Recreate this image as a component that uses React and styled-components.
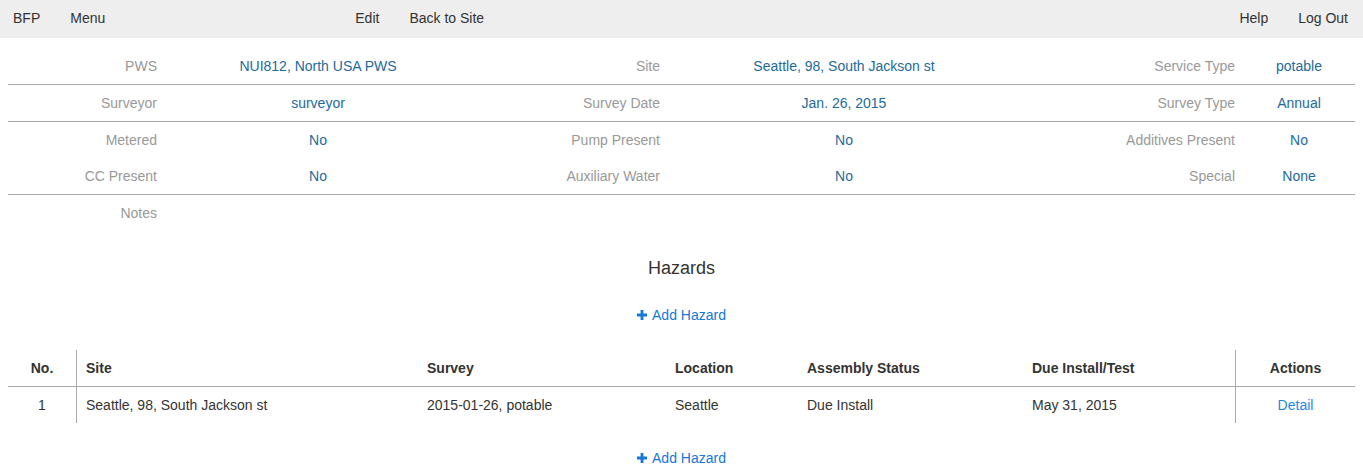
import React from "react";
import styled, { createGlobalStyle } from "styled-components";

const Global = createGlobalStyle`
  html, body { margin: 0; padding: 0; background: #fff; }
  body {
    font-family: "Liberation Sans", Arial, Helvetica, sans-serif;
    font-size: 14px;
    line-height: 20px;
    color: #333;
  }
  * { box-sizing: border-box; }
`;

const NavBar = styled.nav`
  display: flex;
  align-items: center;
  height: 38px;
  background: #eee;
`;

const NavGroup = styled.div`
  display: flex;
  align-items: center;
  margin-left: ${(p) => p.$offset || "0"};
`;

const NavItem = styled.a`
  display: block;
  padding: 8px 15px 10px;
  padding-left: ${(p) => (p.$brand ? "13px" : "15px")};
  color: #333;
  text-decoration: none;
  cursor: pointer;
`;

const Content = styled.main`
  padding: 10px 8px 0;
`;

const InfoRow = styled.div`
  display: grid;
  grid-template-columns: 157px 306px 197px 352px 223px 112px;
  height: ${(p) => (p.$line ? "37px" : "36px")};
  border-bottom: ${(p) => (p.$line ? "1px solid #aaa" : "none")};
`;

const Label = styled.div`
  padding: 8px 8px 8px 0;
  text-align: right;
  color: #999;
  white-space: nowrap;
`;

const Value = styled.div`
  padding: 8px 0;
  text-align: center;
  color: #236a9b;
  white-space: nowrap;
`;

const Heading = styled.h3`
  margin: 27px 0 0;
  font-size: 18px;
  font-weight: 400;
  line-height: 20px;
  text-align: center;
  color: #333;
`;

const AddRow = styled.div`
  display: flex;
  justify-content: center;
  margin-top: ${(p) => p.$top};
`;

const AddLink = styled.a`
  display: inline-flex;
  align-items: center;
  gap: 5px;
  color: #1577d8;
  text-decoration: none;
  cursor: pointer;
`;

const PlusIcon = () => (
  <svg width="10" height="10" viewBox="0 0 10 10" aria-hidden="true">
    <path d="M3.6 0h2.8v3.6H10v2.8H6.4V10H3.6V6.4H0V3.6h3.6z" fill="currentColor" />
  </svg>
);

const Table = styled.div`
  margin-top: 25px;
`;

const TableRow = styled.div`
  display: grid;
  grid-template-columns: 69px 341px 248px 132px 225px 212px 120px;
  height: ${(p) => (p.$head ? "37px" : "36px")};
  border-bottom: ${(p) => (p.$head ? "1px solid #aaa" : "none")};
  font-weight: ${(p) => (p.$head ? 700 : 400)};
`;

const Cell = styled.div`
  padding: 8px 9px;
  white-space: nowrap;
  text-align: ${(p) => p.$align || "left"};
  border-right: ${(p) => (p.$rightLine ? "1px solid #aaa" : "none")};
  border-left: ${(p) => (p.$leftLine ? "1px solid #aaa" : "none")};
`;

const DetailLink = styled.a`
  color: #1e86e2;
  text-decoration: none;
  cursor: pointer;
`;

const info = [
  { line: true, cells: [["PWS", "NUI812, North USA PWS"], ["Site", "Seattle, 98, South Jackson st"], ["Service Type", "potable"]] },
  { line: true, cells: [["Surveyor", "surveyor"], ["Survey Date", "Jan. 26, 2015"], ["Survey Type", "Annual"]] },
  { line: false, cells: [["Metered", "No"], ["Pump Present", "No"], ["Additives Present", "No"]] },
  { line: true, cells: [["CC Present", "No"], ["Auxiliary Water", "No"], ["Special", "None"]] },
  { line: false, cells: [["Notes", ""], ["", ""], ["", ""]] },
];

const AddHazard = ({ top }) => (
  <AddRow $top={top}>
    <AddLink>
      <PlusIcon />
      Add Hazard
    </AddLink>
  </AddRow>
);

export default function App() {
  return (
    <>
      <Global />
      <NavBar>
        <NavGroup>
          <NavItem $brand>BFP</NavItem>
          <NavItem>Menu</NavItem>
        </NavGroup>
        <NavGroup $offset="220px">
          <NavItem>Edit</NavItem>
          <NavItem>Back to Site</NavItem>
        </NavGroup>
        <NavGroup $offset="auto">
          <NavItem>Help</NavItem>
          <NavItem>Log Out</NavItem>
        </NavGroup>
      </NavBar>
      <Content>
        {info.map((row, i) => (
          <InfoRow key={i} $line={row.line}>
            {row.cells.map(([l, v], j) => (
              <React.Fragment key={j}>
                <Label>{l}</Label>
                <Value>{v}</Value>
              </React.Fragment>
            ))}
          </InfoRow>
        ))}
        <Heading>Hazards</Heading>
        <AddHazard top="27px" />
        <Table>
          <TableRow $head>
            <Cell $align="center" $rightLine>No.</Cell>
            <Cell>Site</Cell>
            <Cell>Survey</Cell>
            <Cell>Location</Cell>
            <Cell>Assembly Status</Cell>
            <Cell>Due Install/Test</Cell>
            <Cell $align="center" $leftLine>Actions</Cell>
          </TableRow>
          <TableRow>
            <Cell $align="center" $rightLine>1</Cell>
            <Cell>Seattle, 98, South Jackson st</Cell>
            <Cell>2015-01-26, potable</Cell>
            <Cell>Seattle</Cell>
            <Cell>Due Install</Cell>
            <Cell>May 31, 2015</Cell>
            <Cell $align="center" $leftLine>
              <DetailLink>Detail</DetailLink>
            </Cell>
          </TableRow>
        </Table>
        <AddHazard top="25px" />
      </Content>
    </>
  );
}
